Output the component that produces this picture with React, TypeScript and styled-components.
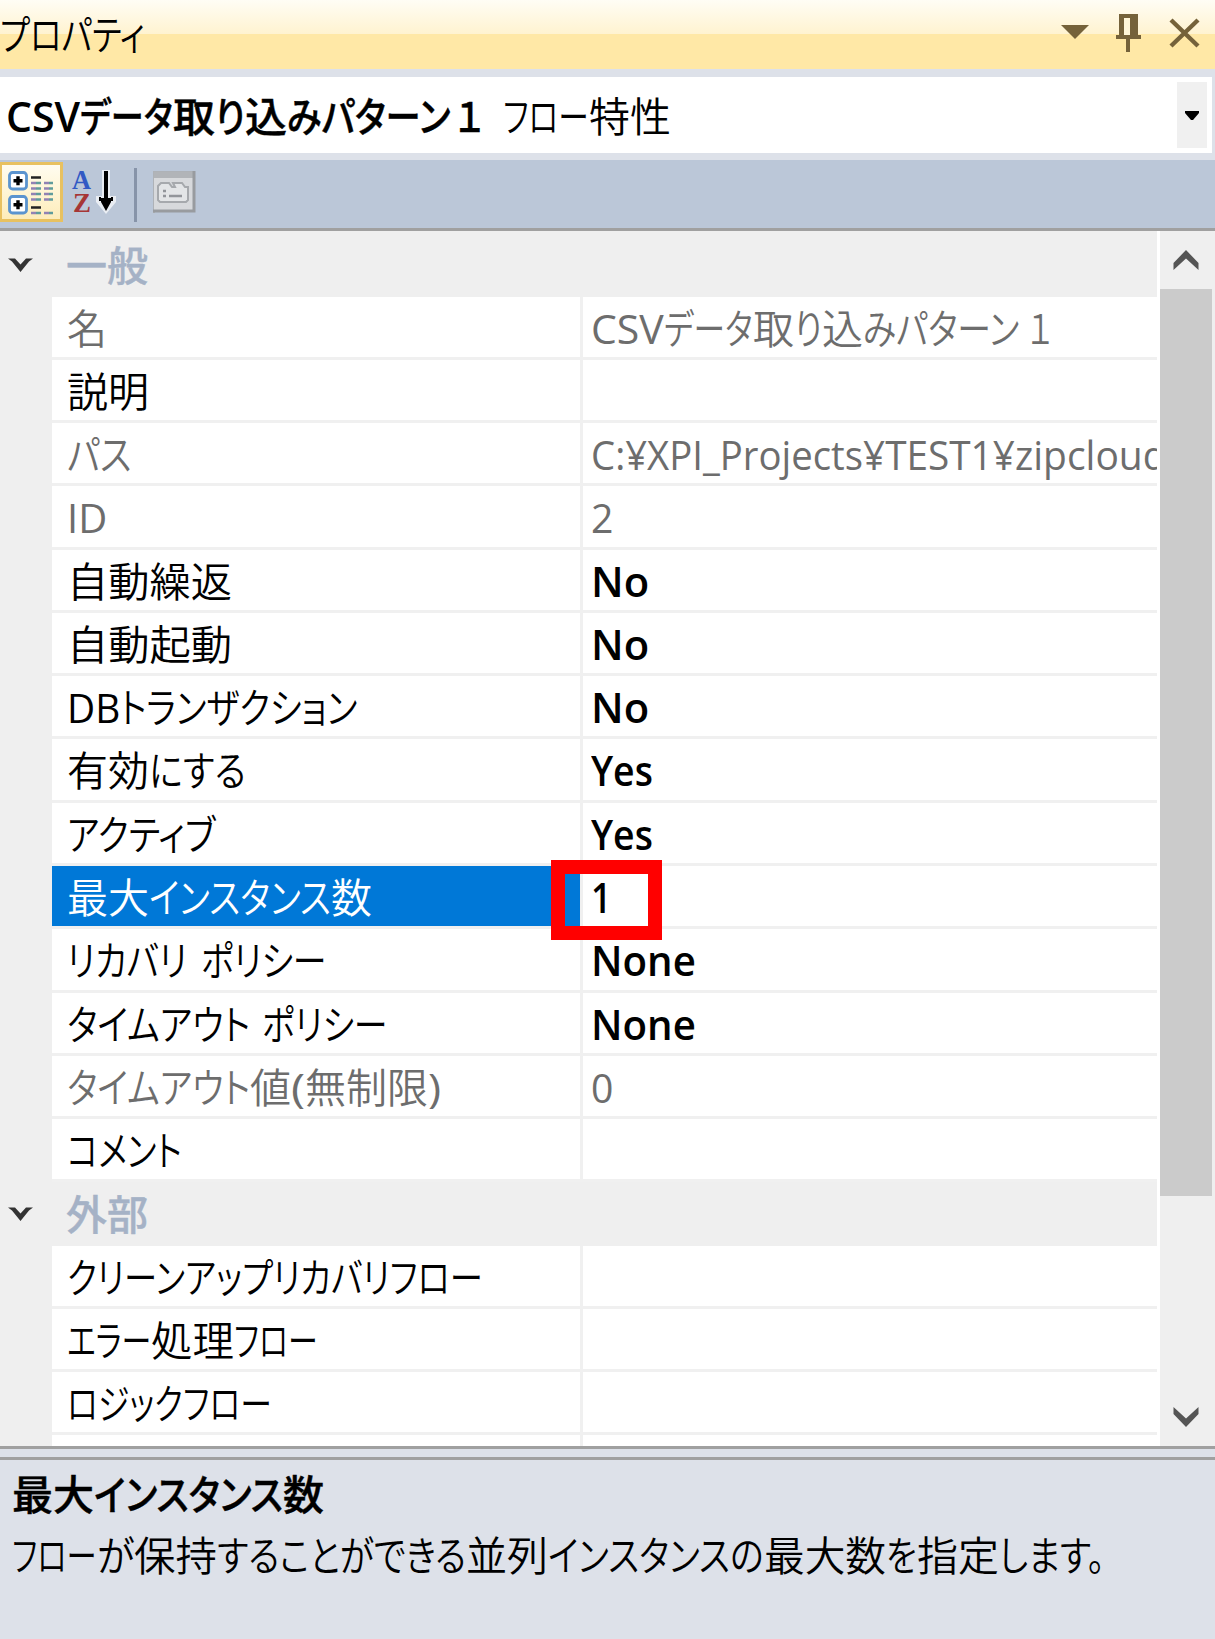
import React, { useLayoutEffect, useRef, useState } from "react";
import styled, { createGlobalStyle, css } from "styled-components";

const GlobalStyle = createGlobalStyle`
  html, body { margin: 0; padding: 0; background: #dde1e9; }
  *, *::before, *::after { box-sizing: border-box; }
  svg { display: block; }
`;

/* A run is a piece of text together with its advance width; a bare number is a gap. */
type Run = [string, number] | number;

const Panel = styled.main`
  display: flex;
  flex-direction: column;
  width: 1215px;
  height: 1639px;
  overflow: hidden;
  background: #dde1e9;
  color: #000;
  font-family: "Open Sans", "Noto Sans CJK JP", sans-serif;
  font-size: 41px;
  line-height: 61px;
  font-feature-settings: "palt";
`;

const Line = styled.span<{ $bold?: boolean }>`
  display: flex;
  align-items: baseline;
  white-space: pre;
  font-weight: ${(p) => (p.$bold ? 600 : 400)};
`;

const RunBox = styled.span`
  display: block;
  flex: none;
`;

const RunGlyphs = styled.span<{ $japanese: boolean; $bold?: boolean }>`
  display: inline-block;
  transform-origin: 0 50%;
  ${(p) =>
    p.$japanese &&
    (p.$bold
      ? css`
          font-weight: 500;
          -webkit-text-stroke: 0.4px currentColor;
        `
      : css`
          font-weight: 350;
        `)}
`;

const Gap = styled.span`
  flex: none;
`;

function FittedRun({ text, width, bold }: { text: string; width: number; bold?: boolean }) {
  const ref = useRef<HTMLSpanElement>(null);
  const [scale, setScale] = useState(1);
  useLayoutEffect(() => {
    const natural = ref.current?.offsetWidth;
    if (natural) setScale(width / natural);
  }, [text, width]);
  return (
    <RunBox style={{ width }}>
      <RunGlyphs
        ref={ref}
        $japanese={text.charCodeAt(0) > 0x2fff}
        $bold={bold}
        style={{ transform: `scaleX(${scale})` }}
      >
        {text}
      </RunGlyphs>
    </RunBox>
  );
}

function Label({ runs, bold }: { runs: Run[]; bold?: boolean }) {
  return (
    <Line $bold={bold}>
      {runs.map((r, i) =>
        typeof r === "number" ? (
          <Gap key={i} style={{ width: r }}> </Gap>
        ) : (
          <FittedRun key={i} text={r[0]} width={r[1]} bold={bold} />
        )
      )}
    </Line>
  );
}

const TitleBar = styled.header`
  display: flex;
  align-items: center;
  justify-content: space-between;
  flex: none;
  height: 69px;
  background: linear-gradient(#fffdf5 0, #fff3d0 34px, #ffe8a6 34px, #ffe8a6 100%);
`;

const TitleButtons = styled.div`
  display: flex;
  align-items: center;
  height: 69px;
`;

const ComboBox = styled.div`
  display: flex;
  align-items: center;
  justify-content: space-between;
  flex: none;
  height: 76px;
  margin: 8px 3px 7px 0;
  padding: 0 5px 0 6px;
  background: #fff;
`;

const ComboText = styled.div`
  display: flex;
  padding-top: 2px;
`;

const ComboButton = styled.div`
  display: flex;
  align-items: center;
  justify-content: center;
  width: 30px;
  height: 66px;
  background: #f0f0f0;
`;

const Toolbar = styled.div`
  display: flex;
  align-items: flex-start;
  flex: none;
  height: 71px;
  padding-top: 2px;
  background: #bbc7d8;
  border-bottom: 3px solid #a0a0a0;
`;

const ToolButton = styled.div<{ $active?: boolean; $width: number }>`
  display: flex;
  width: ${(p) => p.$width}px;
  height: 60px;
  ${(p) =>
    p.$active &&
    css`
      background: linear-gradient(#fffcf0, #fff6d8 45%, #fdecba);
      border: 3px solid #e8c160;
      border-left-width: 2px;
    `}
`;

const ToolSeparator = styled.div`
  width: 3px;
  height: 54px;
  margin: 6px 15px 0 11px;
  background: #8794a9;
`;

const GridArea = styled.section`
  display: flex;
  flex: none;
  height: 1215px;
  background: #fff;
`;

const Rows = styled.div`
  width: 1157px;
  overflow: hidden;
`;

const Category = styled.div<{ $height: number }>`
  display: flex;
  align-items: flex-end;
  height: ${(p) => p.$height}px;
  padding-bottom: 1px;
  background: #efefef;
  color: #a5b2c6;
`;

const CategoryToggle = styled.div`
  width: 66px;
  height: 61px;
  padding: 21px 0 0 7px;
`;

const PropertyRow = styled.div`
  display: grid;
  grid-template-columns: 52px 528px 577px;
  height: 63.28px;
  line-height: 57px;
`;

const Gutter = styled.div`
  background: #efefef;
`;

const NameCell = styled.div<{ $readOnly?: boolean; $selected?: boolean }>`
  padding: 3px 0 0 15px;
  border-bottom: 3px solid #f0f0f0;
  background: ${(p) => (p.$selected ? "#0078d7" : "#fff")};
  color: ${(p) => (p.$selected ? "#fff" : p.$readOnly ? "#6d6d6d" : "#000")};
`;

const ValueCell = styled.div<{ $readOnly?: boolean }>`
  position: relative;
  padding: 3px 0 0 8px;
  border-left: 3px solid #f0f0f0;
  border-bottom: 3px solid #f0f0f0;
  color: ${(p) => (p.$readOnly ? "#6d6d6d" : "#000")};
`;

const Highlight = styled.div`
  position: absolute;
  z-index: 2;
  left: -32px;
  top: -6px;
  width: 111px;
  height: 80px;
  border: 14px solid #ff0000;
`;

const ScrollBar = styled.div`
  display: flex;
  flex-direction: column;
  width: 55px;
  margin-left: 3px;
  padding-right: 3px;
  background: #efefef;
`;

const ScrollArrow = styled.div`
  display: flex;
  align-items: center;
  justify-content: center;
  height: 58px;
`;

const ScrollThumb = styled.div`
  height: 907px;
  margin-bottom: auto;
  background: #cbcbcb;
`;

const Splitter = styled.div`
  flex: none;
  height: 14px;
  border-top: 3px solid #a0a0a0;
  border-bottom: 3px solid #a0a0a0;
`;

const Help = styled.footer`
  padding: 4px 0 0 12px;
`;

const TitleGlyphs = () => (
  <TitleButtons>
    <svg width="155" height="69" fill="#75623a">
      <path d="M1 25H29L15 39Z" />
      <path d="M59 14h19v21h3v4H70v13h-4V39H56v-4h3ZM64 18v17h6V18Z" fillRule="evenodd" />
      <path d="M64 18h6v17h-6Z" fill="#fff6d8" />
      <path d="M111 20l27 26M138 20l-27 26" stroke="#75623a" strokeWidth="4.4" fill="none" />
    </svg>
  </TitleButtons>
);

const ExpandBox = ({ y }: { y: number }) => (
  <g>
    <rect x="7.5" y={y} width="17" height="16.5" rx="3" fill="#fff" stroke="#5b94cf" strokeWidth="2.8" />
    <path d={`M11.5 ${y + 8.2}h9M16 ${y + 3.7}v9`} stroke="#000" strokeWidth="3.4" />
  </g>
);

const CategorizedIcon = () => (
  <svg width="58" height="54">
    <ExpandBox y={7.5} />
    <ExpandBox y={31.5} />
    <g strokeWidth="2.4">
      <path d="M29 12.5h10M29 42.5h10" stroke="#222" />
      <path d="M29 18h5M29 23.5h5M29 29h5M29 34.5h5M29 48h5M42 18h5M42 23.5h5M42 29h5M42 34.5h5M42 48h5" stroke="#9182b4" />
      <path d="M34 18h5M34 23.5h5M34 29h5M34 34.5h5M34 48h5M47 18h4M47 23.5h4M47 29h4M47 34.5h4M47 48h4" stroke="#5f9c9c" />
    </g>
  </svg>
);

const SortLetter = styled.text`
  font-family: "Liberation Serif", serif;
  font-weight: 700;
  font-size: 27px;
`;

const SortIcon = () => (
  <svg width="60" height="60">
    <SortLetter x="9" y="27" textLength="19" lengthAdjust="spacingAndGlyphs" fill="#3159c4">A</SortLetter>
    <SortLetter x="10" y="50" textLength="18" lengthAdjust="spacingAndGlyphs" fill="#a63636">Z</SortLetter>
    <path d="M39 8h8v26h6v6L43 52 33 40v-6h6Z" fill="#e9edf3" />
    <path d="M41 9h4v27h3v4l-5 9-5-9v-4h3ZM36 35h2v4h-2ZM48 35h2v4h-2Z" fill="#000" />
  </svg>
);

const PropertyPageIcon = () => (
  <svg width="46" height="60">
    <path d="M2 51V10H43" stroke="#aeb2b7" strokeWidth="2" fill="none" />
    <rect x="2" y="11" width="39" height="37" fill="#d7d9dc" />
    <rect x="2" y="10" width="39" height="6" fill="#b1b4b8" />
    <path d="M1 49H42V9" stroke="#989b9f" strokeWidth="3" fill="none" />
    <path d="M6 38V24l3-3h8l3 4h3l-2-4h9l3 4h3v13l-2 2H8Z" stroke="#a6a9ad" strokeWidth="2" fill="#e3e5e7" />
    <path d="M11 29h3M11 34h3M17 34h13" stroke="#92959a" strokeWidth="2.6" />
  </svg>
);

const Caret = () => (
  <svg width="27" height="18">
    <path d="M1 2.5H8L13.5 8.5 19 2.5H26L22 5.5 13.5 16 5 5.5Z" fill="#333" />
  </svg>
);

const ScrollChevron = ({ up }: { up?: boolean }) => (
  <svg width="26" height="20">
    <path d={up ? "M0.5 20V13L13 0 25.5 13V20L13 8.5Z" : "M0.5 0V7L13 20 25.5 7V0L13 11.5Z"} fill="#555" />
  </svg>
);

interface Property {
  name: Run[];
  value?: Run[];
  readOnly?: boolean;
  selected?: boolean;
}

const general: Property[] = [
  {
    name: [["名", 40]],
    value: [["CSV", 73], ["データ", 89], ["取", 41], ["り", 28], ["込", 41], ["みパターン", 156], 9, ["１", 24]],
    readOnly: true,
  },
  { name: [["説明", 82]] },
  { name: [["パス", 64]], value: [["C:¥XPI_Projects", 272], ["¥TEST1¥", 152], ["zipcloud", 152]], readOnly: true },
  { name: [["ID", 40]], value: [["2", 22]], readOnly: true },
  { name: [["自動繰返", 165]], value: [["No", 58]] },
  { name: [["自動起動", 165]], value: [["No", 58]] },
  { name: [["DB", 53], ["トランザクション", 237]], value: [["No", 58]] },
  { name: [["有効", 82], ["にする", 97]], value: [["Yes", 62]] },
  { name: [["アクティブ", 148]], value: [["Yes", 62]] },
  { name: [["最大", 82], ["インスタンス", 182], ["数", 41]], value: [["1", 20]], selected: true },
  { name: [["リカバリ", 120], 14, ["ポリシー", 125]], value: [["None", 105]] },
  { name: [["タイムアウト", 183], 12, ["ポリシー", 125]], value: [["None", 105]] },
  {
    name: [["タイムアウト", 183], ["値", 41], ["(", 14], ["無制限", 123], [")", 13]],
    value: [["0", 22]],
    readOnly: true,
  },
  { name: [["コメント", 115]] },
];

const external: Property[] = [
  { name: [["クリーンアップリカバリフロー", 416]] },
  { name: [["エラー", 84], ["処理", 83], ["フロー", 84]] },
  { name: [["ロジックフロー", 205]] },
  { name: [] },
];

const PropertyItem = ({ name, value, readOnly, selected }: Property) => (
  <PropertyRow>
    <Gutter />
    <NameCell $readOnly={readOnly} $selected={selected}>
      <Label runs={name} />
    </NameCell>
    <ValueCell $readOnly={readOnly}>
      {value && <Label runs={value} bold={!readOnly} />}
      {selected && <Highlight />}
    </ValueCell>
  </PropertyRow>
);

export default function App() {
  return (
    <Panel>
      <GlobalStyle />
      <TitleBar>
        <Label runs={[["プロパティ", 145]]} />
        <TitleGlyphs />
      </TitleBar>
      <ComboBox>
        <ComboText>
          <Label
            bold
            runs={[["CSV", 74], ["データ", 93], ["取", 42], ["り", 30], ["込", 42], ["みパターン", 163], 6, ["１", 27]]}
          />
          <Label runs={[20, ["フロー", 86], ["特性", 82]]} />
        </ComboText>
        <ComboButton>
          <svg width="14" height="9">
            <path d="M0 0H14V2L8 9H6L0 2Z" />
          </svg>
        </ComboButton>
      </ComboBox>
      <Toolbar>
        <ToolButton $active $width={63}>
          <CategorizedIcon />
        </ToolButton>
        <ToolButton $width={60}>
          <SortIcon />
        </ToolButton>
        <ToolSeparator />
        <ToolButton $width={46}>
          <PropertyPageIcon />
        </ToolButton>
      </Toolbar>
      <GridArea>
        <Rows>
          <Category $height={65.6}>
            <CategoryToggle>
              <Caret />
            </CategoryToggle>
            <Label bold runs={[["一般", 82]]} />
          </Category>
          {general.map((p, i) => (
            <PropertyItem key={i} {...p} />
          ))}
          <Category $height={63.28}>
            <CategoryToggle>
              <Caret />
            </CategoryToggle>
            <Label bold runs={[["外部", 82]]} />
          </Category>
          {external.map((p, i) => (
            <PropertyItem key={i} {...p} />
          ))}
        </Rows>
        <ScrollBar>
          <ScrollArrow>
            <ScrollChevron up />
          </ScrollArrow>
          <ScrollThumb />
          <ScrollArrow>
            <ScrollChevron />
          </ScrollArrow>
        </ScrollBar>
      </GridArea>
      <Splitter />
      <Help>
        <Label bold runs={[["最大", 82], ["インスタンス", 189], ["数", 41]]} />
        <Label
          runs={[
            ["フロー", 85],
            ["が", 37],
            ["保持", 83],
            ["することができる", 249],
            ["並列", 82],
            ["インスタンス", 182],
            ["の", 34],
            ["最大数", 122],
            ["を", 31],
            ["指定", 82],
            ["します。", 106],
          ]}
        />
      </Help>
    </Panel>
  );
}
